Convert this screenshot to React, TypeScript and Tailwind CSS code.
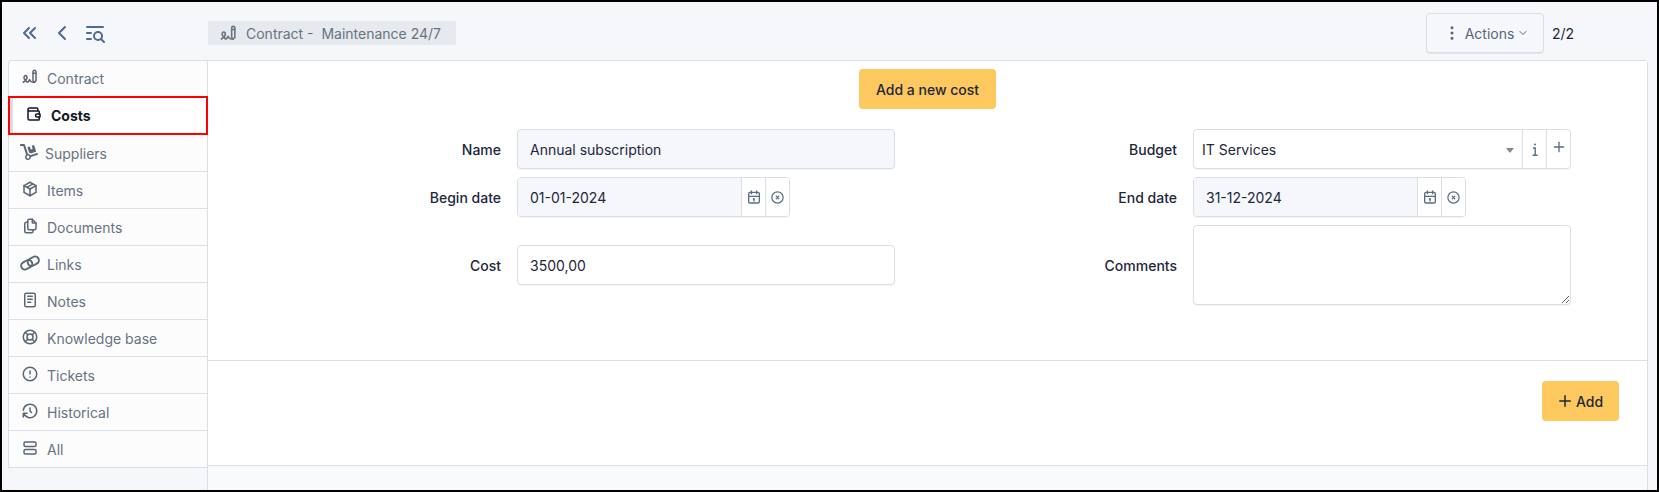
import type { ReactNode } from "react";
import {
  TbAlertCircle,
  TbCalendar,
  TbChevronDown,
  TbChevronLeft,
  TbChevronsLeft,
  TbCircleX,
  TbDotsVertical,
  TbFiles,
  TbHistory,
  TbLifebuoy,
  TbListSearch,
  TbNotes,
  TbPackage,
  TbPlus,
  TbWallet,
  TbWritingSign,
} from "react-icons/tb";
import { FaDolly } from "react-icons/fa";

function RowsIcon({ className }: { className?: string }) {
  return (
    <svg viewBox="0 0 24 24" fill="none" stroke="currentColor" strokeWidth="2" className={className}>
      <rect x="4" y="4" width="16" height="6" rx="2" />
      <rect x="4" y="14" width="16" height="6" rx="2" />
    </svg>
  );
}

function WideLink({ className }: { className?: string }) {
  return (
    <svg viewBox="0 0 20 18" fill="none" stroke="currentColor" strokeWidth="1.9" className={`${className} -mx-px !w-5`}>
      <g transform="rotate(-28 10 9)">
        <rect x="0.5" y="5.2" width="11.5" height="7.6" rx="3.8" />
        <rect x="8" y="5.2" width="11.5" height="7.6" rx="3.8" />
      </g>
    </svg>
  );
}

function SerifI() {
  return (
    <svg viewBox="0 0 6 13" className="h-[13px] w-[6px]" fill="none" stroke="currentColor" strokeWidth="1.4">
      <circle cx="3" cy="1.4" r="1" fill="currentColor" stroke="none" />
      <path d="M1 5h2.2v7M0.6 12.2h5" />
    </svg>
  );
}

const tabs = [
  { label: "Contract", icon: TbWritingSign },
  { label: "Costs", icon: TbWallet, active: true },
  { label: "Suppliers", icon: FaDolly },
  { label: "Items", icon: TbPackage },
  { label: "Documents", icon: TbFiles },
  { label: "Links", icon: WideLink },
  { label: "Notes", icon: TbNotes },
  { label: "Knowledge base", icon: TbLifebuoy },
  { label: "Tickets", icon: TbAlertCircle },
  { label: "Historical", icon: TbHistory },
  { label: "All", icon: RowsIcon },
];

function Label({ children, className = "" }: { children: ReactNode; className?: string }) {
  return (
    <label className={`flex h-10 items-center justify-end pr-4 text-[14px] font-medium text-[#1d273b] ${className}`}>
      {children}
    </label>
  );
}

function DateField({ value }: { value: string }) {
  return (
    <div className="flex h-10 w-[273px] overflow-hidden rounded border border-[#dadfe5] shadow-[0_1px_1px_rgba(0,0,0,0.05)]">
      <div className="flex flex-1 items-center bg-[#f5f7fb] px-[12px] text-[14px] text-[#1d273b]">{value}</div>
      <div className="flex w-[24px] items-center justify-center border-l border-[#dadfe5] bg-white text-[#5d6c85]">
        <TbCalendar className="h-4 w-4" />
      </div>
      <div className="flex w-[24px] items-center justify-center border-l border-[#dadfe5] bg-white text-[#5d6c85]">
        <TbCircleX className="h-[15px] w-[15px]" />
      </div>
    </div>
  );
}

export default function App() {
  return (
    <div className="flex h-[492px] w-[1659px] flex-col overflow-hidden border-2 border-black bg-[#f5f7fb] font-['Inter',sans-serif]">
      {/* header */}
      <div className="flex h-[58px] shrink-0 items-center pl-[16px] pt-[4px] text-[#667382]">
        <div className="flex w-[190px] items-center text-[#4f6a94]">
          <TbChevronsLeft className="h-6 w-6" />
          <TbChevronLeft className="ml-2 h-6 w-6" />
          <TbListSearch className="ml-[9px] h-6 w-6" />
        </div>
        <div className="flex h-6 w-[248px] items-center gap-[8px] rounded-[2px] bg-[#e6e9ee] pl-[11px] text-[14px]">
          <TbWritingSign className="h-[19px] w-[19px]" />
          <span className="whitespace-pre">Contract -  Maintenance 24/7</span>
        </div>
        <div className="ml-auto flex h-10 w-[118px] items-center justify-center rounded border border-[#dadfe5] bg-[#f5f7fb] pl-[2px] text-[14px] text-[#55657d] shadow-[0_1px_1px_rgba(0,0,0,0.08)]">
          <TbDotsVertical className="mr-[4px] h-[18px] w-[18px]" />
          <span>Actions</span>
          <TbChevronDown className="ml-[3px] h-3 w-3" />
        </div>
        <div className="ml-[8px] mr-[71px] w-[34px] text-[14px] text-[#1d273b]">2/2</div>
      </div>

      <div className="flex min-h-0 flex-1">
        {/* sidebar */}
        <div className="ml-[6px] w-[199px] shrink-0">
          <div className="rounded-tl border border-r-0 border-[#dadfe5] bg-[#fcfcfd]">
            {tabs.map((tab, i) => {
              const Icon = tab.icon;
              if (tab.active) {
                return (
                  <div key={tab.label} className="relative z-10 -ml-px -mr-px h-[39px] border-2 border-[#ff0000] bg-white">
                    <div className="flex h-full items-center gap-[8px] border-l-[3px] border-[#dadfe5] pl-[12px] text-[14px] font-bold text-[#111827]">
                      <Icon className="mb-[3px] h-[18px] w-[18px]" />
                      <span>{tab.label}</span>
                    </div>
                  </div>
                );
              }
              return (
                <div
                  key={tab.label}
                  className={`flex items-center text-[14px] text-[#667382] ${
                    tab.label === "Suppliers" ? "gap-[7px] pl-[11px]" : "gap-[8px] pl-[12px]"
                  } ${i === 0 ? "h-[35px]" : i === 2 ? "h-[36px]" : "h-[37px] border-t border-[#dadfe5]"}`}
                >
                  <Icon className="mb-[3px] h-[18px] w-[18px] text-[#5b6675]" />
                  <span>{tab.label}</span>
                </div>
              );
            })}
          </div>
        </div>

        {/* panel */}
        <div className="mr-[9px] flex flex-1 flex-col rounded-tr border border-b-0 border-[#dadfe5] bg-[#f9fafb]">
          <div className="bg-white">
            <div className="flex justify-center pt-2">
              <button className="h-10 w-[137px] rounded bg-[#fdc85d] text-[14px] font-medium text-[#1d273b]">Add a new cost</button>
            </div>
            <div className="mt-5 grid h-[232px] grid-cols-[309px_378px_298px_378px] grid-rows-[40px_40px_80px] items-start gap-y-2 border-b border-[#dadfe5]">
              <Label>Name</Label>
              <div className="flex h-10 items-center rounded border border-[#dadfe5] bg-[#f5f7fb] px-[12px] text-[14px] text-[#1d273b] shadow-[0_1px_1px_rgba(0,0,0,0.05)]">Annual subscription</div>
              <Label>Budget</Label>
              <div className="flex h-10 overflow-hidden rounded border border-[#dadfe5] bg-white text-[14px] text-[#1d273b] shadow-[0_1px_1px_rgba(0,0,0,0.05)]">
                <div className="flex flex-1 items-center pl-2">
                  <span className="flex-1">IT Services</span>
                  <span className="mr-2 mt-[2px] h-0 w-0 border-x-[4px] border-t-[5px] border-x-transparent border-t-[#888]" />
                </div>
                <div className="flex w-[24px] items-center justify-center border-l border-[#dadfe5] text-[#5d6c85]"><SerifI /></div>
                <div className="flex w-[24px] items-center justify-center border-l border-[#dadfe5] text-[#5d6c85]"><TbPlus className="mb-[5px] h-4 w-4" /></div>
              </div>

              <Label>Begin date</Label>
              <DateField value="01-01-2024" />
              <Label>End date</Label>
              <DateField value="31-12-2024" />

              <Label className="mt-[20px]">Cost</Label>
              <div className="mt-[20px] flex h-10 items-center rounded border border-[#dadfe5] bg-white px-[12px] text-[14px] text-[#1d273b] shadow-[0_1px_1px_rgba(0,0,0,0.05)]">3500,00</div>
              <Label className="mt-[20px]">Comments</Label>
              <textarea className="h-20 rounded border border-[#dadfe5] bg-white shadow-[0_1px_1px_rgba(0,0,0,0.05)]" />
            </div>
            <div className="flex h-[105px] items-start justify-end border-b border-[#dadfe5] pr-[28px] pt-5">
              <button className="flex h-10 w-[77px] items-center justify-center gap-[2px] rounded bg-[#fdc85d] pr-[2px] text-[14px] font-medium text-[#1d273b]">
                <TbPlus className="h-[18px] w-[18px]" />
                Add
              </button>
            </div>
          </div>
        </div>
      </div>
    </div>
  );
}
